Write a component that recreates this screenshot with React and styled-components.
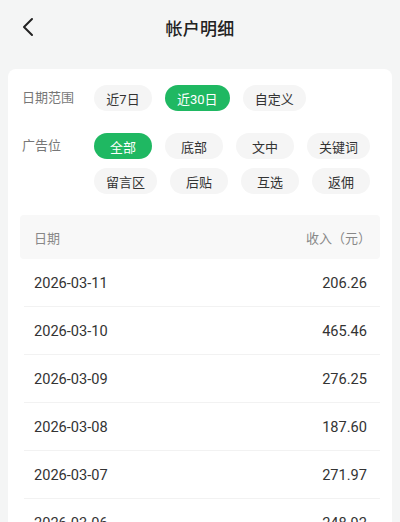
import React, { useState } from 'react';
import styled, { createGlobalStyle } from 'styled-components';

const GlobalStyle = createGlobalStyle`
  html, body {
    margin: 0;
    padding: 0;
    background: #f4f5f5;
  }
  body {
    font-family: Roboto, "Noto Sans CJK SC", sans-serif;
    color: #333;
  }
`;

const Page = styled.div`
  width: 400px;
  height: 522px;
  overflow: hidden;
  background: #f4f5f5;
`;

const Header = styled.div`
  position: relative;
  height: 54px;
  display: flex;
  align-items: center;
  justify-content: center;
`;

const BackButton = styled.button`
  position: absolute;
  left: 16px;
  top: 15px;
  width: 24px;
  height: 24px;
  padding: 0;
  border: none;
  background: none;
  display: flex;
  align-items: center;
  justify-content: center;
  color: #222;
`;

const Title = styled.h1`
  margin: 0;
  font-size: 17px;
  font-weight: 500;
  color: #222;
  letter-spacing: 0.3px;
`;

const Card = styled.div`
  margin: 15px 8px 0;
  background: #fff;
  border-radius: 8px 8px 0 0;
  padding: 16px 12px 0;
`;

const FilterRow = styled.div`
  display: flex;
  align-items: flex-start;
  padding-left: 2px;
  margin-bottom: ${({ $gap }) => $gap}px;
`;

const Label = styled.div`
  width: 72px;
  flex-shrink: 0;
  font-size: 13px;
  line-height: 26px;
  color: #777;
`;

const Chips = styled.div`
  flex: 1;
  display: flex;
  flex-wrap: wrap;
  column-gap: 13px;
  row-gap: 9px;
`;

const Chip = styled.button`
  min-width: 58px;
  height: 26px;
  padding: 0 12px;
  border: none;
  border-radius: 13px;
  font-family: inherit;
  font-size: 13px;
  background: ${({ $active }) => ($active ? '#1fb862' : '#f5f5f5')};
  color: ${({ $active }) => ($active ? '#fff' : '#333')};
`;

const Table = styled.div`
  display: flex;
  flex-direction: column;
`;

const TableHead = styled.div`
  height: 44px;
  display: flex;
  align-items: center;
  justify-content: space-between;
  padding: 0 9px 0 14px;
  background: #f8f8f8;
  border-radius: 4px;
  font-size: 13px;
  color: #888;
`;

const Row = styled.div`
  height: 48px;
  display: flex;
  align-items: center;
  justify-content: space-between;
  padding: 0 13px 0 10px;
  margin-left: 4px;
  font-size: 14.6px;
  color: #333;
  border-bottom: 1px solid #f2f2f2;
  box-sizing: border-box;
`;

const dateOptions = ['近7日', '近30日', '自定义'];
const slotOptions = ['全部', '底部', '文中', '关键词', '留言区', '后贴', '互选', '返佣'];
const records = [
  ['2026-03-11', '206.26'],
  ['2026-03-10', '465.46'],
  ['2026-03-09', '276.25'],
  ['2026-03-08', '187.60'],
  ['2026-03-07', '271.97'],
  ['2026-03-06', '248.92'],
];

export default function App() {
  const [range, setRange] = useState('近30日');
  const [slot, setSlot] = useState('全部');

  return (
    <Page>
      <GlobalStyle />
      <Header>
        <BackButton>
          <svg width="14" height="20" viewBox="0 0 14 20" fill="none">
            <polyline
              points="11,2 3,10 11,18"
              stroke="currentColor"
              strokeWidth="2"
              strokeLinecap="round"
              strokeLinejoin="round"
            />
          </svg>
        </BackButton>
        <Title>帐户明细</Title>
      </Header>
      <Card>
        <FilterRow $gap={22}>
          <Label>日期范围</Label>
          <Chips>
            {dateOptions.map(opt => (
              <Chip key={opt} $active={range === opt} onClick={() => setRange(opt)}>
                {opt}
              </Chip>
            ))}
          </Chips>
        </FilterRow>
        <FilterRow $gap={21}>
          <Label>广告位</Label>
          <Chips>
            {slotOptions.map(opt => (
              <Chip key={opt} $active={slot === opt} onClick={() => setSlot(opt)}>
                {opt}
              </Chip>
            ))}
          </Chips>
        </FilterRow>
        <Table>
          <TableHead>
            <span>日期</span>
            <span>收入（元）</span>
          </TableHead>
          {records.map(([date, amount]) => (
            <Row key={date}>
              <span>{date}</span>
              <span>{amount}</span>
            </Row>
          ))}
        </Table>
      </Card>
    </Page>
  );
}
